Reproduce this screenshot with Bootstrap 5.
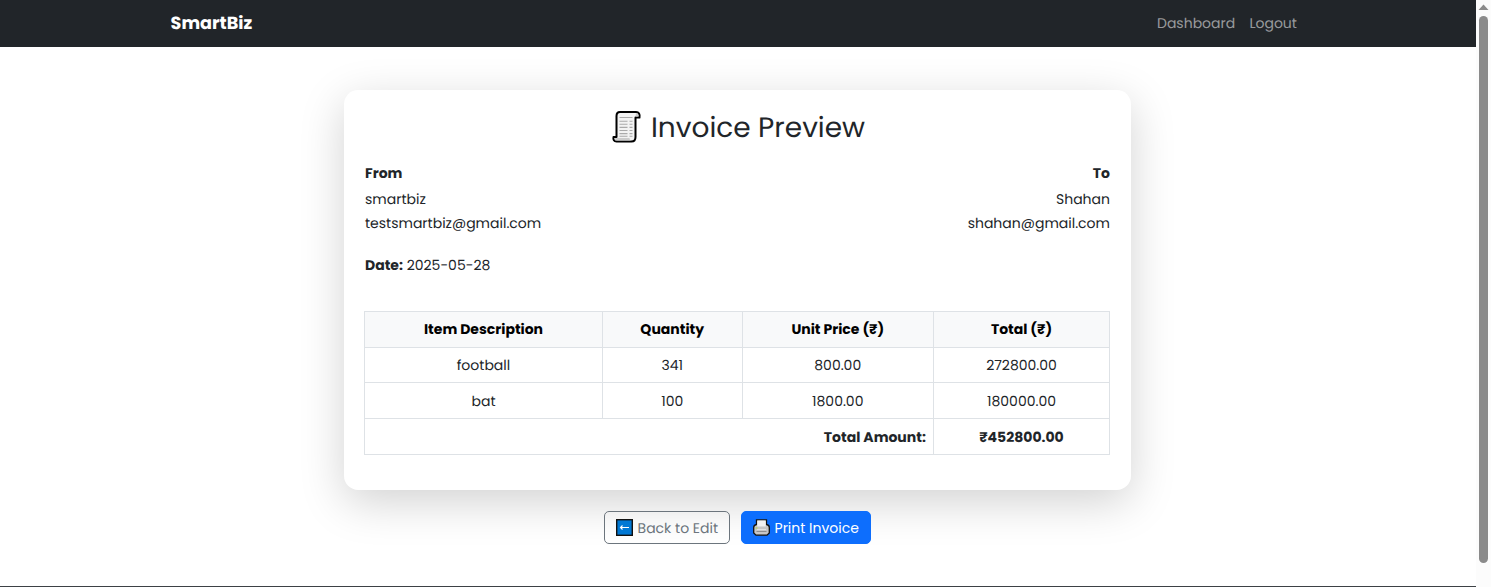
<!DOCTYPE html>
<html lang="en">
<head>
<meta charset="utf-8">
<meta name="viewport" content="width=device-width, initial-scale=1">
<title>SmartBiz - Invoice Preview</title>
<link href="https://cdn.jsdelivr.net/npm/bootstrap@5.3.0/dist/css/bootstrap.min.css" rel="stylesheet">
<style>
  html { font-size: 14px; }
  body { font-family: Poppins, Inter, "Liberation Sans", sans-serif; height: 587px; overflow: hidden; line-height: 24.1px; background: #fff; text-rendering: geometricPrecision; }
  .site-nav { height: 47.4px; padding: 0 0 1px; }
  .nav-wrap { width: 1156px; padding: 0 12px 0 10.6px; }
  .site-nav .navbar-brand { font-size: 17.6px; font-weight: 700; margin: 0; padding: 1px 0 0; line-height: 26px; }
  .site-nav .nav-link { padding: 0 7.1px; color: rgba(255,255,255,.55); }
  main { padding-right: 1px; }
  .invoice { width: 787px; height: 400.5px; margin-top: 42.2px; padding: 21.3px 21px; border-radius: 14.2px; box-shadow: 0 12px 45px rgba(0,0,0,.18); }
  .invoice h2 { font-size: 28px; line-height: 34px; font-weight: 400; margin: -1px 0 21px; padding-left: 2px; gap: 10px; }
  .invoice h2 span { padding-top: 1px; line-height: 34px; margin-bottom: -1px; }
  .party-title { font-size: 14px; font-weight: 700; line-height: 17px; margin-bottom: 5.3px; }
  .issue-date { margin: 17.6px 0 33.8px; }
  .inv-table { width: 745px; table-layout: fixed; margin: 0 0 0 -1px; line-height: 20px; }
  .inv-table td, .inv-table th { padding: 7.2px 7.1px; height: 35.7px; border-color: #dee2e6; }
  .inv-table thead th { background: #f8f9fa; color: #000; }
  .inv-table tr:last-child td { padding-top: 7.8px; padding-bottom: 6.6px; }
  .c-item { width: 238px; }
  .c-qty { width: 139.5px; }
  .c-price { width: 191.5px; }
  .c-total { width: 176px; }
  .actions { margin-top: 21px; gap: 11px; }
  .actions .btn { height: 33.4px; padding: 0 11px; font-size: 14px; line-height: 31px; border-radius: 5px; display: inline-flex; align-items: center; gap: 4.5px; }
  .actions .btn span { padding-top: 1px; }
  .page-foot { height: 2px; background: #3d4145; margin-top: 41.3px; }
  .scroll-rail { width: 15px; background: #fcfcfc; }
</style>
</head>
<body class="d-flex">
<div class="flex-grow-1">
  <nav class="site-nav navbar navbar-dark bg-dark">
    <div class="nav-wrap mx-auto d-flex justify-content-between align-items-center">
      <a class="navbar-brand" href="#">SmartBiz</a>
      <div class="d-flex"><a class="nav-link" href="#">Dashboard</a><a class="nav-link" href="#">Logout</a></div>
    </div>
  </nav>
  <main>
    <section class="invoice mx-auto bg-white">
      <h2 class="d-flex justify-content-center align-items-center">
        <svg width="29" height="34" viewBox="0 0 29 34" aria-hidden="true">
          <path d="M8 2H24C27 2 28 4 27.5 7.5H23.5V27C23.500 30 22 31.500 19.500 31.500H4.500C2 31.500 1 29.500 1.500 27H4.500V6C4.500 3.500 5.500 2 8 2Z" fill="#f3f3f3" stroke="#000" stroke-width="2" stroke-linejoin="round"/>
          <path d="M24 3Q26.700 3.500 26.500 6.500H23.500M2.500 28H17.500Q17.500 30.500 19.500 30.500H5Q2.800 30.500 2.500 28" fill="#ccc"/>
          <path d="M7.500 7.500H20.500M7.500 11.200H15.500M17.500 11.200H20.500M7.500 14.300H15.500M17.500 14.300H20.500M7.500 17.400H15.500M17.500 17.400H20.500M7.500 20.500H15.500M17.500 20.500H20.500M7.500 23.600H15.500M17.500 23.600H20.500M7.500 26.300H15.500M17.500 26.300H20.500" stroke="#aaa" stroke-width="1.100"/>
        </svg>
        <span>Invoice Preview</span>
      </h2>
      <div class="d-flex justify-content-between">
        <div>
          <div class="party-title">From</div>
          <div>smartbiz</div>
          <div>testsmartbiz@gmail.com</div>
        </div>
        <div class="text-end">
          <div class="party-title">To</div>
          <div>Shahan</div>
          <div>shahan@gmail.com</div>
        </div>
      </div>
      <div class="issue-date"><strong>Date:</strong> 2025-05-28</div>
      <table class="inv-table table table-bordered text-center align-middle">
        <colgroup><col class="c-item"><col class="c-qty"><col class="c-price"><col class="c-total"></colgroup>
        <thead><tr><th>Item Description</th><th>Quantity</th><th>Unit Price (₹)</th><th>Total (₹)</th></tr></thead>
        <tbody>
          <tr><td>football</td><td>341</td><td>800.00</td><td>272800.00</td></tr>
          <tr><td>bat</td><td>100</td><td>1800.00</td><td>180000.00</td></tr>
          <tr><td colspan="3" class="text-end fw-bold">Total Amount:</td><td class="fw-bold">₹452800.00</td></tr>
        </tbody>
      </table>
    </section>
    <div class="actions d-flex justify-content-center">
      <a href="#" class="btn btn-outline-secondary">
        <svg width="17" height="17" viewBox="0 0 17 17" aria-hidden="true"><rect x=".7" y=".7" width="15.600" height="15.600" fill="#0078d4" stroke="#111" stroke-width="1.400"/><path d="M13 8.500H4.500M6.500 6.500L4.500 8.500 6.500 10.500" fill="none" stroke="#fff" stroke-width="1.100"/></svg>
        <span>Back to Edit</span>
      </a>
      <button class="btn btn-primary">
        <svg width="17" height="17" viewBox="0 0 17 17" aria-hidden="true"><path d="M3.500 5.500V.8H13.500V5.500Q16.300 6 16.300 8.500V14L14 16.200H3L.7 14V8.500Q.7 6 3.500 5.500Z" fill="#c6c6c6" stroke="#111" stroke-width="1.300"/><path d="M4.300 1.500H12.700V7.500H4.300Z" fill="#f1f1f1"/><path d="M3.500 12.500H13.500" stroke="#8d8d8d"/><path d="M4 10.500H13" stroke="#e2e2e2"/><path d="M2.500 9H4.500" stroke="#b7d334"/></svg>
        <span>Print Invoice</span>
      </button>
    </div>
  </main>
  <div class="page-foot"></div>
</div>
<svg class="scroll-rail flex-shrink-0" width="15" height="587" viewBox="0 0 15 587" aria-hidden="true"><path d="M2.500 10L7.500 4.500 12.500 10Z" fill="#8b8b8b"/><rect x="3" y="16" width="9" height="547" rx="4.500" fill="#8b8b8b"/></svg>
<script src="https://cdn.jsdelivr.net/npm/bootstrap@5.3.0/dist/js/bootstrap.bundle.min.js"></script>
</body>
</html>
